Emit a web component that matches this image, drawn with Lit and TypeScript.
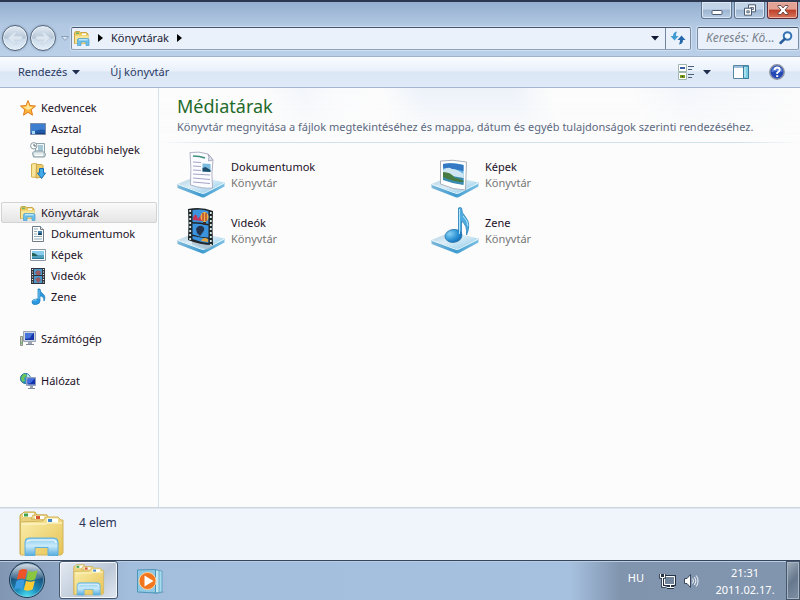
import { LitElement, html, css, svg, type TemplateResult } from "lit";
import { customElement, property } from "lit/decorators.js";
import { classMap } from "lit/directives/class-map.js";

const platform = svg`
  <defs>
    <linearGradient id="plat" x1="0" y1="0" x2="1" y2="1"><stop offset="0" stop-color="#a9cbdd"/><stop offset=".45" stop-color="#dceef7"/><stop offset="1" stop-color="#8cc8e8"/></linearGradient>
    <linearGradient id="edge" x1="0" y1="0" x2="1" y2="0"><stop offset="0" stop-color="#7fb9da"/><stop offset=".5" stop-color="#3f9bd0"/><stop offset="1" stop-color="#7cc0e2"/></linearGradient>
  </defs>
  <path d="M.5 33 L26 41 L47.500 31.500 V35.500 L28 46 Q26 47 24 46 L.5 37Z" fill="url(#edge)"/>
  <path d="M.5 33 L20 25 L47.500 31.500 L28 41.500 Q26 42.500 24 41.500Z" fill="url(#plat)"/>
  <path d="M1 33.500 L24 42 Q26 42.800 28 42 L47 32.300" fill="none" stroke="#f0fbff" stroke-width="1"/>`;

const libraryFolders = svg`
  <defs>
    <linearGradient id="yel" x1="0" y1="0" x2="1" y2="1"><stop offset="0" stop-color="#fbf0b0"/><stop offset="1" stop-color="#e6c252"/></linearGradient>
    <linearGradient id="stand" x1="0" y1="0" x2="0" y2="1"><stop offset="0" stop-color="#86cbee"/><stop offset=".45" stop-color="#c9ebfa"/><stop offset="1" stop-color="#55acdf"/></linearGradient>
  </defs>
  <path d="M2 43 V5 Q2 3 4 3 L6 1 H17 L19 4 H29 V43Z" fill="#ead27c" stroke="#c9a94c"/>
  <path d="M5 2 h11 v4 h-11z" fill="#f8fbf5"/><path d="M6 2.500h4v3h-4z" fill="#40a548"/>
  <path d="M13 8 L15 4 H29 L32 8Z" fill="#f3e49c" stroke="#cdb059"/>
  <path d="M17 5h9v3h-9z" fill="#fff"/><path d="M18 5h4v3h-4z" fill="#d65335"/>
  <path d="M2.500 11 L25 10 L28 6 H40 L43 9 H45 V42 L43 44 H2.500Z" fill="url(#yel)" stroke="#d2b45a"/>
  <path d="M29 7.500h11v4h-11z" fill="#fff"/><path d="M30 8h4v3h-4z" fill="#3d86cc"/>
  <path d="M4 13 H27 L29 12 H44" stroke="#fffad2" fill="none"/>
  <path d="M7 31 Q7 27 11 27 H36 Q40 27 40 31 V44.500 H30 V36.500 H17 V44.500 H7Z" fill="url(#stand)" stroke="#5eb0dc"/>
  <path d="M9 31 Q10 29 13 29 H35 Q38 29 38 32" fill="none" stroke="#fff" stroke-width="1.500" opacity=".7"/>`;

const pictures: Record<string, { box: string; art: unknown }> = {
  library: {
    box: "0 0 16 16",
    art: svg`<path d="M.5 13.500V3l1-1.500h4l1 1h6l1.500 1.500v9.500z" fill="#e9c85d" stroke="#c9a64a"/><path d="M1 5.500h13.500v8H1z" fill="#f6e596"/><path d="M2 2.500h3v1.500H2z" fill="#6cb46a"/><path d="M8 3.500h4v1.500H8z" fill="#fff"/><path d="M3.500 15.500V10q0-1.500 1.500-1.500h8.500q1.500 0 1.500 1.500v5.500h-3v-3.500H7v3.500z" fill="#6dbfe9" stroke="#4c9fce" stroke-width=".7"/><path d="M5 9.800h8.500" stroke="#dff6ff"/>`,
  },
  star: {
    box: "0 0 16 16",
    art: svg`<path d="M8 .5l2 5 5.500.5-4.200 3.700 1.200 5.500L8 12.300l-4.500 2.900 1.200-5.500L.5 6 6 5.500z" fill="#fbb43b" stroke="#df7f1d"/><path d="M8 2.500L9.200 6.500 13 7 9.800 9.200 8 10 5 8 3 7l3.700-.6z" fill="#ffe69a"/>`,
  },
  desktop: {
    box: "0 0 16 16",
    art: svg`<path d="M.5 2.500h15v11H.5z" fill="#1d58a9" stroke="#7b8ca8"/><path d="M1 3h14v6Q8 7 1 12z" fill="#3d7fce"/><path d="M2 10h3v3H2z" fill="#a7d7f3"/><path d="M6 12h9v1H6z" fill="#173d7b"/>`,
  },
  recent: {
    box: "0 0 16 16",
    art: svg`<path d="M5.500 1.500h9v10h-9z" fill="#f2f7fa" stroke="#8fa3ad"/><path d="M8 4h5M8 6h5M8 8h5" stroke="#5b96b0"/><path d="M2.500 11l2-2h8l3 3-1 3h-11z" fill="#ccdade" stroke="#869ba4"/><path d="M4 12h9M5 13.500h8" stroke="#fff"/><circle cx="3.800" cy="3.800" r="3.200" fill="#fff" stroke="#89979d"/><path d="M4 2v2h2" stroke="#4f606b" fill="none"/>`,
  },
  downloads: {
    box: "0 0 16 16",
    art: svg`<path d="M1.500 1l5-.5v14l-5-.5z" fill="#f8e59b" stroke="#d5b251"/><path d="M6.500 1.500h5.500l1 1v11.500l-7 1z" fill="#ebcc68" stroke="#caa449"/><path d="M9.500 5.500h4v4.500h2l-4 5.500-4-5.500h2z" fill="#42aae6" stroke="#1871b8"/>`,
  },
  document: {
    box: "0 0 16 16",
    art: svg`<path d="M2.500.5h8l3 3v12h-11z" fill="#fff" stroke="#707b86"/><path d="M10.500.5v3h3" fill="#e8edf0" stroke="#707b86"/><path d="M4 3h4M4 5.500h3M4 8h3M4 10.500h8M4 13h8" stroke="#91a8b8"/><path d="M8 5h4v4H8z" fill="#3b81b5"/><path d="M8 8l2-1 2 1v1H8z" fill="#193f5a"/>`,
  },
  image: {
    box: "0 0 16 16",
    art: svg`<path d="M.5 2.500h15v11H.5z" fill="#fff" stroke="#8996a1"/><path d="M2 4h12v8H2z" fill="#86cceb"/><path d="M2 6q4 0 6 2.500h6V12H2z" fill="#287798"/><path d="M2 6q3 0 5 3H2z" fill="#25604e"/><path d="M2 10h12" stroke="#75c7dc"/>`,
  },
  video: {
    box: "0 0 16 16",
    art: svg`<path d="M1 0h14v16H1z" fill="#30343a"/><path d="M4 1h8v6H4zM4 8h8v7H4z" fill="#4a98cc"/><path d="M5 5q2-5 6-1l-1 3H7zM5 11l4-2 2 3-3 3z" fill="#965b64"/><path d="M2.500 1v14M13.500 1v14" stroke="#eef3f6" stroke-dasharray="1 1.500" stroke-width="1.200"/>`,
  },
  music: {
    box: "0 0 16 16",
    art: svg`<path d="M8 0h2q0 3 3 5t1 7q0-5-4-5v5q0 3-4 3.500t-4-2.500q0-3 6-3z" fill="#2d99df" stroke="#1477b8" stroke-width=".7"/><path d="M3.500 12q1-2 3-1" stroke="#9cdbfa" fill="none"/><path d="M9 1v9" stroke="#78c5ef"/>`,
  },
  computer: {
    box: "0 0 16 16",
    art: svg`<path d="M.5 5.500h2v9h-2z" fill="#c6cdb8" stroke="#8b9484"/><path d="M1 12h1.500" stroke="#48b944"/><path d="M3.500.5h12v10h-12z" fill="#ccd3e1" stroke="#9aa4b7"/><path d="M5 2h9v7H5z" fill="#1733a8"/><path d="M5 2h9q-2 1-4 5L5 8z" fill="#4673d9"/><path d="M8 11h4v2H8z" fill="#a0a8b4"/><path d="M6 13.500h8" stroke="#7e8998"/>`,
  },
  network: {
    box: "0 0 16 16",
    art: svg`<circle cx="5.500" cy="5.500" r="5" fill="#2c91c9" stroke="#1b6c94"/><path d="M1 5q2-5 5-4l1 2-3 2 1 3-3 1z" fill="#68c45b"/><path d="M7 1q3 1 3 4L7 4z" fill="#bfe6f5"/><path d="M6.500 4.500h9v8h-9z" fill="#c8d0e2" stroke="#929fb8"/><path d="M7.500 5.500h7.500v6H7.500z" fill="#1335ac"/><path d="M7.500 5.500h7.500l-5 5H7.500z" fill="#416de0"/><path d="M10 13h3v2h-3z" fill="#99a4b2"/><path d="M8 15.500h7" stroke="#83909f"/>`,
  },
  folders: { box: "0 0 48 46", art: libraryFolders },
  bigDocument: {
    box: "0 0 48 48",
    art: svg`${platform}<path d="M13 1.500 Q22 0 31 3 L36 9 Q34 22 35.500 37 Q26 38 13.500 34 Q14.500 17 13 1.500Z" fill="#fbfcff" stroke="#a7a9bd" stroke-width=".9"/><path d="M31 3q1.500 3 .5 7l4.500-1z" fill="#dfe4ed" stroke="#9a9db3" stroke-width=".8"/><path d="M16 5q7 0 12 2" fill="none" stroke="#3f8f7d" stroke-width="1.600"/><path d="M16 11l8 .5M16 15l8 .5M16 19l8 .5M16 23l17 1M16 27l17 1.500M16 31l17 1.500" stroke="#a3a3c6"/><path d="M25.500 12.500l8 .5v8l-8-.5z" fill="#79bbe0"/><path d="M25.500 17l3-1 5 3v2l-8-.5z" fill="#1f4d6c"/>`,
  },
  bigImage: {
    box: "0 0 48 48",
    art: svg`${platform}<path d="M9.500 10q12-2 26 1l-1 28q-12 0-25-6z" fill="#fff" stroke="#a3a7b1" stroke-width=".9"/><path d="M12 13q10-2 20.500 1v19.500q-10-1-20.500-5z" fill="#60afe1"/><path d="M12 13q9-2 20.500 1v6q-9-2-20.500-3z" fill="#3379c4"/><path d="M12 19q5-4 9-1 5 0 11.500 5v4H12z" fill="#cfe6f2"/><path d="M12 22q6 0 9 3l11.500 2v7q-10-1-20.500-5z" fill="#3a8bb0"/><path d="M12 21q8 0 12 6 4 0 8.500 3v1q-10 0-20.500-5z" fill="#477b42"/>`,
  },
  bigVideo: {
    box: "0 0 48 48",
    art: svg`${platform}<path d="M15 33l22 5-6 5-16-6z" fill="#a4b4bf" opacity=".6"/><path d="M11 2q13-3 25 2-1 17 0 34-13 0-25-5 1-16 0-31z" fill="#202529"/><path d="M15.500 3q9-1.500 16 1v13q-8-2-16-2zM15.500 16.500q8 0 16 2v12q-8 0-16-3zM15.500 29l16 3v4q-9-1-16-4z" fill="#3a93dc"/><path d="M16 11q2-6 4-2l1 3 3-4 1 6-9-1z" fill="#c43457"/><ellipse cx="27.500" cy="10" rx="4" ry="5" fill="#efb345"/><path d="M26 6v8M29 6v8" stroke="#b94a32" stroke-width="1.500"/><path d="M26 15h3l-.5 3h-2z" fill="#3b2b28"/><path d="M19 22q2-4 6-3 4 2 1 6l-3 4-3-3z" fill="#25344c"/><path d="M24 34q2-5 7-2v3z" fill="#dfa441"/><path d="M13.200 3v30M33.800 5v33" stroke="#d7eee8" stroke-dasharray="2 2" stroke-width="1.800"/>`,
  },
  bigMusic: {
    box: "0 0 48 48",
    art: svg`${platform}<defs><radialGradient id="note" cx=".3" cy=".3" r=".8"><stop offset="0" stop-color="#88d2f5"/><stop offset=".6" stop-color="#2b91d3"/><stop offset="1" stop-color="#1569ae"/></radialGradient></defs><path d="M27.500 1q2-1 3 0 0 5 4 9 6 7 1 18 1-10-5-14v14h-3z" fill="#4eacdf" stroke="#2a80b8" stroke-width=".8"/><ellipse cx="22.500" cy="29" rx="8.500" ry="6.500" fill="url(#note)" stroke="#2876ab" stroke-width=".8" transform="rotate(-8 22 29)"/><path d="M28.500 2v25M32 9q5 5 5 10" stroke="#b2e5f9" fill="none"/>`,
  },
  media: {
    box: "0 0 30 28",
    art: svg`<path d="M18 24l11 1-9 2z" fill="#5f88ab" opacity=".6"/><path d="M20 3l6 1v21l-6 1z" fill="#a9dbee" stroke="#4c9bbe" stroke-width=".8"/><path d="M17 2.500l6 1v22l-6 .5z" fill="#c6e9f4" stroke="#579fbd" stroke-width=".8"/><path d="M1.500 3l18-.5v23.500l-18-1z" fill="#8fc9e3" stroke="#4b95b8"/><circle cx="11.500" cy="14" r="8.500" fill="#f1761d" stroke="#ffd29c"/><path d="M8.500 8.500l9 5.500-9 5.500z" fill="#fff"/>`,
  },
  views: {
    box: "0 0 16 16",
    art: svg`<path d="M.5.5h8v7h-8zM.5 8.500h8v7h-8z" fill="#fff" stroke="#a0b7af"/><path d="M2 3h5v2H2z" fill="#355fa5"/><path d="M2 11h5v3H2z" fill="#789b1e"/><path d="M4 12h1v1H4z" fill="#222"/><path d="M10 2.500h6M10 5.500h4M10 10.500h6M10 13.500h4" stroke="#496078"/>`,
  },
  pane: {
    box: "0 0 16 14",
    art: svg`<path d="M.5.5h15v13H.5z" fill="#fff" stroke="#5686a4"/><path d="M1 2h9" stroke="#7fabd1" stroke-width="1.500"/><path d="M10.500 1h5v12.500h-5z" fill="#7bcbe1" stroke="#397d9f"/><path d="M12 2v10" stroke="#d5f4fa"/>`,
  },
  help: {
    box: "0 0 16 16",
    art: svg`<circle cx="8" cy="8" r="7.200" fill="#2448b5" stroke="#8d95a6" stroke-width="1.500"/><path d="M2.500 8q0-5 5.500-5t5.500 5q-5-2-11 0z" fill="#5e83dc"/><path d="M5.500 6q.3-2.500 2.700-2.500T10.800 6Q10.500 7.500 8.200 8.700V10" fill="none" stroke="#fff" stroke-width="1.800"/><path d="M7.200 11.200h2v1.800h-2z" fill="#fff"/>`,
  },
  refresh: {
    box: "0 0 16 14",
    art: svg`<path d="M7 .5Q3 1 3 5H.5L4.500 9.500 8.500 5H6q0-2.500 1-4.500z" fill="#3f9bd2"/><path d="M9 13.500q4-.5 4-4.500h2.500L11.500 4.500 7.500 9H10q0 2.500-1 4.500z" fill="#2767ab"/>`,
  },
  search: {
    box: "0 0 14 14",
    art: svg`<circle cx="8.500" cy="5" r="3.800" fill="#f2f9fe" stroke="#3673b5" stroke-width="2"/><path d="M5.800 7.800L1.500 12" stroke="#295c9b" stroke-width="2.500" stroke-linecap="round"/>`,
  },
  minimize: { box: "0 0 14 12", art: svg`<rect x="2" y="6.500" width="10" height="4" rx="1" fill="#fff" stroke="#4c5b70"/>` },
  restore: { box: "0 0 14 12", art: svg`<path d="M5.500.8h7v7h-7z" fill="#fff" stroke="#4c5b70"/><path d="M7.500 3.500h3v2h-3z" fill="#b9cbe0" stroke="#4c5b70" stroke-width=".8"/><path d="M1.500 4.200h7v7h-7z" fill="#fff" stroke="#4c5b70"/><path d="M3.800 6.800h2.500v2H3.800z" fill="#b9cbe0" stroke="#4c5b70" stroke-width=".8"/>` },
  close: { box: "0 0 14 12", art: svg`<path d="M2 1.500h3L7 4l2-2.500h3v1L9 6l3 3.500v1H9L7 8l-2 2.500H2v-1L5 6 2 2.500z" fill="#fff" stroke="#63403f" stroke-width=".9"/>` },
  wired: {
    box: "0 0 16 16",
    art: svg`<path d="M4.500 3.500h10v8h-10z" fill="#6d7e91" stroke="#243244" stroke-width="3"/><path d="M7 14.500h7M10 11v3" stroke="#243244" stroke-width="3"/><path d="M4.500 3.500h10v8h-10z" fill="#71849a" stroke="#fff"/><path d="M7 14.500h7M10.500 12v2" stroke="#fff"/><path d="M.5 1v3.500h4V1M2.500 1v3.500M2.500 5v8.500h3" fill="none" stroke="#243244" stroke-width="2.500"/><path d="M.5 1v3.500h4V1M2.500 5v8.500h3" fill="none" stroke="#fff"/>`,
  },
  sound: {
    box: "0 0 16 16",
    art: svg`<path d="M1.500 5.500h2.500L7.500 1.500v13L4 10.500H1.500z" fill="#fff" stroke="#39485a"/><path d="M9.500 5.500q2 2.500 0 5M11.500 4q3 4 0 8M13.300 2.500q3.500 5.500 0 11" fill="none" stroke="#f3f7fb"/>`,
  },
};

const picture = (name: string, cls = "small") =>
  html`<svg class=${cls} viewBox=${pictures[name].box} aria-hidden="true">${pictures[name].art}</svg>`;

const orb = html`<svg class="orb" viewBox="0 0 38 38" aria-hidden="true">
  <defs>
    <radialGradient id="orb" cx=".5" cy="1" r=".95"><stop offset="0" stop-color="#4fe6f4"/><stop offset=".35" stop-color="#1d8fbd"/><stop offset=".75" stop-color="#1b4d78"/><stop offset="1" stop-color="#466b8b"/></radialGradient>
    <linearGradient id="gloss" x1="0" y1="0" x2="0" y2="1"><stop offset="0" stop-color="#fff" stop-opacity=".75"/><stop offset="1" stop-color="#fff" stop-opacity=".1"/></linearGradient>
  </defs>
  <circle cx="19" cy="19" r="17.500" fill="url(#orb)" stroke="#22384e"/>
  <circle cx="19" cy="19" r="16.500" fill="none" stroke="#9bc9df" stroke-width=".8" opacity=".7"/>
  <path d="M3.500 17Q5 3 19 3t15.500 14Q19 21 3.500 17z" fill="url(#gloss)"/>
  <path d="M11 9.500q4.500-2.500 8.200-.7L17 18q-4-1.500-8.200.7z" fill="#ee5428"/>
  <path d="M20.300 9.800q4.500 2.200 9.200-.5l-2.300 9q-4.500 2.200-9.200.3z" fill="#8bc63f"/>
  <path d="M8.500 20q4.400-2.200 8.200-.6l-2.200 8.700q-4.200-1.700-8.200.6z" fill="#3c9ce2"/>
  <path d="M18 20q4.400 1.800 8.900-.3l-2.200 8.600q-4.400 2.400-8.900.5z" fill="#fdcc34"/>
</svg>`;

interface Place { label: string; icon: string; child?: boolean; selected?: boolean; }

const groups: Place[][] = [
  [
    { label: "Kedvencek", icon: "star" },
    { label: "Asztal", icon: "desktop", child: true },
    { label: "Legutóbbi helyek", icon: "recent", child: true },
    { label: "Letöltések", icon: "downloads", child: true },
  ],
  [
    { label: "Könyvtárak", icon: "library", selected: true },
    { label: "Dokumentumok", icon: "document", child: true },
    { label: "Képek", icon: "image", child: true },
    { label: "Videók", icon: "video", child: true },
    { label: "Zene", icon: "music", child: true },
  ],
  [{ label: "Számítógép", icon: "computer" }],
  [{ label: "Hálózat", icon: "network" }],
];

const libraries = [
  { name: "Dokumentumok", icon: "bigDocument" },
  { name: "Képek", icon: "bigImage" },
  { name: "Videók", icon: "bigVideo" },
  { name: "Zene", icon: "bigMusic" },
];

const base = css`
  * { box-sizing: border-box; }
  button, input { font: inherit; color: inherit; margin: 0; padding: 0; border: 0; background: none; }
  a { color: inherit; text-decoration: none; }
  svg { display: block; flex: none; overflow: visible; }
  .small { width: 16px; height: 16px; }
`;

@customElement("window-header")
export class WindowHeader extends LitElement {
  static styles = [base, css`
    :host { display: block; flex: none; background: linear-gradient(#94afcf, #b3c9e3 24px, #bad0e9); border-top: 2px solid #2b3850; }
    .title { height: 18px; display: flex; justify-content: flex-end; gap: 2px; padding-right: 2px; }
    .title button { width: 31px; height: 17px; display: grid; place-items: center; border: 1px solid #62758f; border-top: 0; border-radius: 0 0 3px 3px; box-shadow: inset 0 0 0 1px #dce8f5; background: linear-gradient(#c3d4e8 45%, #9cb4d0 50%, #b8cde5); }
    .title .close { background: linear-gradient(#e2a395 45%, #bd3e28 50%, #d9765c); border-color: #5c2832; box-shadow: inset 0 0 0 1px #eab5a8; }
    .title svg { width: 14px; height: 12px; }
    .bar { display: flex; align-items: center; height: 36px; padding: 0 1px 0 2px; }
    .travel { width: 26px; height: 26px; border-radius: 50%; border: 1px solid #52647b; margin-right: 2px; background: linear-gradient(#e5edf5, #b6c6d7 50%, #ccdbea 55%, #e3eef8); box-shadow: inset 0 0 0 1px #edf4fa, 0 0 2px #7e91a9; display: grid; place-items: center; }
    .travel svg { width: 16px; height: 14px; }
    .history { width: 13px; height: 20px; display: grid; place-items: center; }
    .history svg { width: 8px; height: 5px; }
    .address { flex: 1; min-width: 0; height: 23px; display: flex; align-items: center; border: 1px solid #67788f; border-color: #46566d #7b8da5 #8fa2b9; border-radius: 2px; background: #eaf1fa; box-shadow: 0 0 1px 1px #d0e0f1; }
    .crumbs { flex: 1; display: flex; align-items: center; padding-left: 2px; }
    .crumbs .tri { width: 5px; height: 8px; margin: 0 8px; }
    .crumbs a { line-height: 20px; color: #1c1c36; }
    .drop { width: 20px; height: 21px; display: grid; place-items: center; }
    .drop svg { width: 8px; height: 5px; }
    .refresh { width: 25px; height: 21px; border-left: 1px solid #74869e; display: grid; place-items: center; }
    .refresh svg { width: 16px; height: 14px; }
    .search { width: 102px; height: 23px; margin-left: 6px; display: flex; align-items: center; padding: 0 5px 0 8px; border: 1px solid #67788f; border-color: #46566d #7b8da5 #8fa2b9; border-radius: 2px; background: #eaf1fa; box-shadow: 0 0 1px 1px #d0e0f1; }
    .search input { flex: 1; width: 0; min-width: 0; font-size: 12px; font-style: italic; outline: 0; }
    .search input::placeholder { color: #7b828e; opacity: 1; }
    .search svg { width: 14px; height: 14px; }
  `];

  render() {
    const tri = html`<svg class="tri" viewBox="0 0 5 8"><path d="M0 0L5 4 0 8z" fill="#000"/></svg>`;
    return html`
      <div class="title">
        <button aria-label="Kis méret">${picture("minimize", "")}</button>
        <button aria-label="Előző méret">${picture("restore", "")}</button>
        <button class="close" aria-label="Bezárás">${picture("close", "")}</button>
      </div>
      <div class="bar">
        <button class="travel" aria-label="Vissza"><svg viewBox="0 0 16 14"><path d="M1 7l6-6h3L7 5h8v4H7l3 4H7z" fill="#dce6f0" stroke="#c3d1df" stroke-width=".7"/></svg></button>
        <button class="travel" aria-label="Előre"><svg viewBox="0 0 16 14"><path d="M15 7L9 1H6l3 4H1v4h8l-3 4h3z" fill="#dce6f0" stroke="#c3d1df" stroke-width=".7"/></svg></button>
        <button class="history" aria-label="Legutóbbi lapok"><svg viewBox="0 0 8 5"><path d="M.5.5h7L4 4.500z" fill="#d7e4f2" stroke="#7d93ae" stroke-width=".8"/></svg></button>
        <div class="address">
          <nav class="crumbs">${picture("library")}${tri}<a href="#">Könyvtárak</a>${tri}</nav>
          <button class="drop" aria-label="Előző helyek"><svg viewBox="0 0 8 5"><path d="M0 0h8L4 4.500z" fill="#101a35"/></svg></button>
          <button class="refresh" aria-label="Frissítés">${picture("refresh", "")}</button>
        </div>
        <label class="search"><input type="text" aria-label="Keresés" placeholder="Keresés: Kö...">${picture("search", "")}</label>
      </div>`;
  }
}

@customElement("command-bar")
export class CommandBar extends LitElement {
  static styles = [base, css`
    :host { display: flex; flex: none; align-items: center; height: 32px; padding: 0 15px 0 18px; color: #2b3a63; border-top: 1px solid #9fb2cb; border-bottom: 1px solid #a5b6d0; background: linear-gradient(#fafcff, #eaf1fb 45%, #dce7f6 50%, #dfe9f8); }
    button { display: flex; align-items: center; height: 24px; }
    .organize { gap: 5px; margin-right: 30px; }
    .arrow { width: 8px; height: 5px; }
    .views { margin-left: auto; gap: 9px; }
    .pane { margin: 0 20px 0 22px; }
    .wide { width: 16px; height: 14px; }
  `];

  render() {
    const arrow = html`<svg class="arrow" viewBox="0 0 8 5"><path d="M0 0H8L4 4.500Z" fill="#1e2e4d"/></svg>`;
    return html`
      <button class="organize">Rendezés ${arrow}</button>
      <button>Új könyvtár</button>
      <button class="views" aria-label="Nézet módosítása">${picture("views")}${arrow}</button>
      <button class="pane" aria-label="Betekintő ablaktábla">${picture("pane", "wide")}</button>
      <button aria-label="Súgó">${picture("help")}</button>`;
  }
}

@customElement("nav-pane")
export class NavPane extends LitElement {
  static styles = [base, css`
    :host { display: flex; flex-direction: column; gap: 21px; flex: none; width: 159px; padding: 9px 1px 0; border-right: 1px solid #d3e2f1; background: #fcfcfc; color: #1a1026; }
    ul { list-style: none; margin: 0; padding: 0; }
    a { display: flex; align-items: center; gap: 5px; height: 21px; padding-left: 18px; border: 1px solid transparent; border-radius: 2px; white-space: nowrap; }
    .child { padding-left: 28px; }
    .selected { border-color: #d3d3d5; background: linear-gradient(#fafafa, #e5e5e6); }
  `];

  render(): TemplateResult {
    return html`${groups.map((group) => html`<ul>${group.map((p) => html`
      <li><a href="#" class=${classMap({ child: !!p.child, selected: !!p.selected })}>${picture(p.icon)}<span>${p.label}</span></a></li>`)}</ul>`)}`;
  }
}

@customElement("library-item")
export class LibraryItem extends LitElement {
  @property() name = "";
  @property() icon = "";

  static styles = [base, css`
    :host { display: block; }
    a { display: flex; align-items: center; gap: 6px; height: 56px; line-height: 16px; color: #1a1026; }
    .picture { width: 48px; height: 48px; }
    .kind { color: #777; }
  `];

  render() {
    return html`<a href="#">${picture(this.icon, "picture")}<div><div>${this.name}</div><div class="kind">Könyvtár</div></div></a>`;
  }
}

@customElement("task-bar")
export class TaskBar extends LitElement {
  static styles = [base, css`
    :host { display: flex; flex: none; height: 40px; border-top: 1px solid #34455c; color: #fff; background: linear-gradient(90deg, #8196b2, #8ba2c0 50px, #a3bddc 130px, #a6c1df calc(100% - 230px), #8094ae calc(100% - 180px), #8295ae); box-shadow: inset 0 1px #b8cce2; }
    .start { width: 38px; height: 38px; margin: 0 13px 0 8px; }
    .orb { width: 38px; height: 38px; }
    .task { width: 59px; height: 38px; margin-right: 18px; display: grid; place-items: center; border: 1px solid #46566e; border-radius: 3px; box-shadow: inset 0 0 0 1px #f4f8fd; background: linear-gradient(135deg, #e3e9f1, #bcc8d8 60%, #e0e7f0); }
    .task svg { width: 34px; height: 32px; }
    .player svg { width: 30px; height: 28px; }
    .tray { margin-left: auto; display: flex; align-items: center; gap: 7px; }
    .lang { margin: 0 9px 6px 0; }
    .clock { width: 68px; margin-left: 5px; text-align: center; line-height: 17px; }
    .peek { width: 14px; align-self: stretch; border: 1px solid #46566b; box-shadow: inset 0 0 0 1px #a6b4c4; background: linear-gradient(135deg, #a1aebc, #66788d 50%, #7f90a5); }
  `];

  render() {
    return html`
      <button class="start" aria-label="Start">${orb}</button>
      <button class="task" aria-label="Könyvtárak">${picture("folders", "")}</button>
      <button class="player" aria-label="Médialejátszó">${picture("media", "")}</button>
      <div class="tray">
        <span class="lang">HU</span>
        ${picture("wired")}
        ${picture("sound")}
        <time class="clock">21:31<br>2011.02.17.</time>
        <button class="peek" aria-label="Asztal megjelenítése"></button>
      </div>`;
  }
}

@customElement("app-root")
export class AppRoot extends LitElement {
  static styles = [base, css`
    :host { display: flex; flex-direction: column; min-height: 100vh; font: 11px/16px "Noto Sans", "Open Sans", sans-serif; background: #fcfcfc; }
    .body { flex: 1; display: flex; }
    main { flex: 1; min-width: 0; }
    header { padding: 5px 18px 7px; border-bottom: 1px solid; border-image: linear-gradient(90deg, #fcfcfc, #cfe1ee 10%, #cfe1ee 90%, #fcfcfc) 1; background: linear-gradient(#fcfcfc00, #fcfcfc), linear-gradient(75deg, #fcfcfc 18%, #f3f6fb 24%, #fafbfd 29%, #fcfcfc 36%, #edf2fa 42%, #edf2fa 56%, #fcfcfc 62%, #fcfcfc 74%, #f3f6fb 82%, #fcfcfc); }
    h1 { margin: 0; font-size: 18px; font-weight: 400; line-height: 26px; color: #1f6b2b; }
    p { margin: 0; color: #5c6880; }
    .grid { display: grid; grid-template-columns: repeat(auto-fill, 254px); padding: 4px 18px; }
    .details { flex: none; display: flex; gap: 13px; height: 53px; padding: 3px 18px 0; font-size: 12px; color: #2a3558; background: #f0f4fb; border-top: 1px solid #cdd5df; box-shadow: inset 0 1px #e1e7ef; }
    .details svg { width: 48px; height: 46px; }
    .details span { padding-top: 4px; }
  `];

  render() {
    return html`
      <window-header></window-header>
      <command-bar></command-bar>
      <div class="body">
        <nav-pane></nav-pane>
        <main>
          <header>
            <h1>Médiatárak</h1>
            <p>Könyvtár megnyitása a fájlok megtekintéséhez és mappa, dátum és egyéb tulajdonságok szerinti rendezéséhez.</p>
          </header>
          <div class="grid">${libraries.map((l) => html`<library-item name=${l.name} icon=${l.icon}></library-item>`)}</div>
        </main>
      </div>
      <footer class="details">${picture("folders", "")}<span>4 elem</span></footer>
      <task-bar></task-bar>`;
  }
}
